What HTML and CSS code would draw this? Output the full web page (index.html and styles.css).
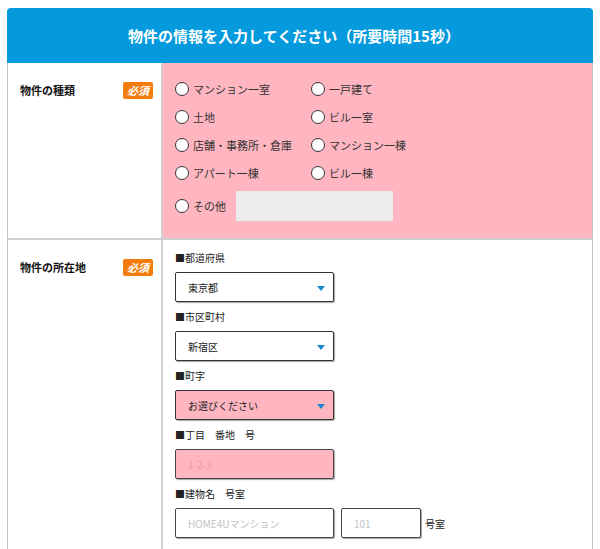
FILE: index.html
```html
<!DOCTYPE html>
<html lang="ja">
<head>
<meta charset="utf-8">
<link rel="stylesheet" href="styles.css">
</head>
<body>
<div class="form">
  <div class="form-head">物件の情報を入力してください（所要時間15秒）</div>
  <div class="row">
    <div class="label-cell">
      <span class="label">物件の種類</span>
      <span class="badge">必須</span>
    </div>
    <div class="field-cell pink">
      <div class="radio-grid">
        <label class="radio"><span class="dot"></span>マンション一室</label>
        <label class="radio"><span class="dot"></span>一戸建て</label>
        <label class="radio"><span class="dot"></span>土地</label>
        <label class="radio"><span class="dot"></span>ビル一室</label>
        <label class="radio"><span class="dot"></span>店舗・事務所・倉庫</label>
        <label class="radio"><span class="dot"></span>マンション一棟</label>
        <label class="radio"><span class="dot"></span>アパート一棟</label>
        <label class="radio"><span class="dot"></span>ビル一棟</label>
      </div>
      <div class="other-row">
        <label class="radio"><span class="dot"></span>その他</label>
        <span class="other-input"></span>
      </div>
    </div>
  </div>
  <div class="row">
    <div class="label-cell">
      <span class="label">物件の所在地</span>
      <span class="badge">必須</span>
    </div>
    <div class="field-cell">
      <div class="sub">■都道府県</div>
      <div class="select"><span>東京都</span><span class="arrow"></span></div>
      <div class="sub">■市区町村</div>
      <div class="select"><span>新宿区</span><span class="arrow"></span></div>
      <div class="sub">■町字</div>
      <div class="select pink-input"><span>お選びください</span><span class="arrow"></span></div>
      <div class="sub">■丁目　番地　号</div>
      <div class="input pink-input"><span class="ph">1-2-3</span></div>
      <div class="sub">■建物名　号室</div>
      <div class="building">
        <div class="input"><span class="ph">HOME4Uマンション</span></div>
        <div class="input small"><span class="ph">101</span></div>
        <span class="unit">号室</span>
      </div>
    </div>
  </div>
</div>
</body>
</html>
```
FILE: styles.css
```css
* { box-sizing: border-box; }
body {
  margin: 0;
  background: #fff;
  font-family: "Noto Sans CJK JP", "Noto Sans", sans-serif;
  color: #222;
}
.form {
  margin: 8px 7px 0 7px;
  width: 586px;
}
.form-head {
  background: #059ade;
  color: #fff;
  font-size: 15px;
  font-weight: bold;
  height: 55px;
  display: flex;
  align-items: center;
  justify-content: center;
  border-radius: 4px 4px 0 0;
  padding-right: 12px;
}
.row {
  display: flex;
  border-left: 1px solid #c4c4c4;
  border-right: 1px solid #c4c4c4;
  border-bottom: 2px solid #cfcfcf;
}
.label-cell {
  width: 155px;
  flex: none;
  display: flex;
  justify-content: space-between;
  align-items: flex-start;
  padding: 19px 8px 0 12px;
  border-right: 2px solid #cfcfcf;
}
.label {
  font-size: 11px;
  font-weight: bold;
  line-height: 17px;
  color: #111;
}
.badge {
  background: #f47c0c;
  color: #fff;
  font-size: 11px;
  font-weight: bold;
  font-style: italic;
  width: 30px;
  height: 17px;
  line-height: 17px;
  text-align: center;
  border-radius: 2px;
}
.field-cell {
  flex: 1;
  padding: 12px 12px 17px 12px;
}
.pink { background: #ffb6c1; }
.radio-grid {
  display: grid;
  grid-template-columns: 136px 1fr;
  grid-auto-rows: 28px;
}
.radio {
  display: flex;
  align-items: center;
  gap: 4px;
  font-size: 11px;
  color: #333;
}
.dot {
  width: 14px;
  height: 14px;
  border: 1px solid #333;
  border-radius: 50%;
  background: #fff;
  flex: none;
}
.other-row {
  display: flex;
  align-items: center;
  gap: 10px;
  margin-top: 4px;
  height: 30px;
}
.other-input {
  width: 157px;
  height: 30px;
  background: #ececec;
}
.sub {
  font-size: 10px;
  color: #222;
  line-height: 14px;
  margin-bottom: 7px;
}
.field-cell .sub:first-child { margin-top: -1px; }
.select, .input {
  width: 159px;
  height: 30px;
  border: 1px solid #333;
  border-radius: 2px;
  box-shadow: 1px 1px 1px rgba(0,0,0,0.35);
  background: #fff;
  display: flex;
  align-items: center;
  justify-content: space-between;
  padding: 0 8px 0 12px;
  font-size: 10px;
  color: #222;
  margin-bottom: 8px;
}
.input {
  border-color: #444;
}
.pink-input { background: #ffb6c1; }
.arrow {
  width: 0;
  height: 0;
  border-left: 4px solid transparent;
  border-right: 4px solid transparent;
  border-top: 5px solid #1b86d0;
  margin-top: 2px;
}
.ph { color: #c2c2c2; }
.pink-input .ph { color: #e79aa6; }
.building {
  display: flex;
  align-items: center;
  gap: 7px;
}
.building .input { margin-bottom: 0; }
.building .input.small { width: 80px; }
.unit {
  font-size: 10px;
  color: #222;
  margin-left: -3px;
}
```
